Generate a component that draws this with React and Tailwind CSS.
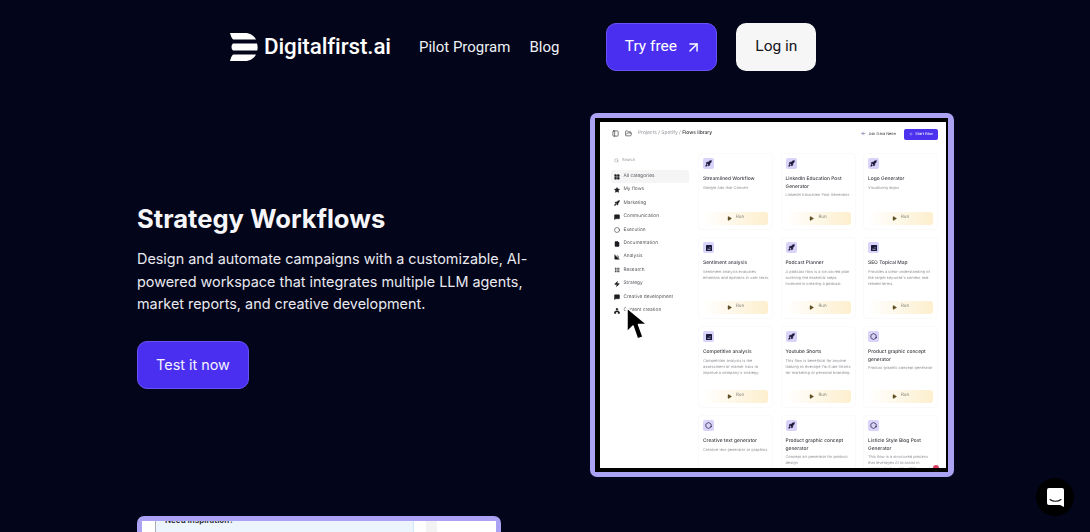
import {
  ArrowLeft,
  ArrowUpRight,
  BarChart3,
  Circle,
  FileText,
  FolderOpen,
  Grip,
  Hexagon,
  LayoutGrid,
  MessageSquare,
  Network,
  PanelLeft,
  Play,
  Plus,
  Rocket,
  Search,
  Star,
  Zap,
} from 'lucide-react';

const categories = [
  { label: 'All categories', Icon: LayoutGrid, active: true },
  { label: 'My flows', Icon: Star },
  { label: 'Marketing', Icon: Rocket },
  { label: 'Communication', Icon: MessageSquare },
  { label: 'Execution', Icon: Circle, outline: true },
  { label: 'Documentation', Icon: FileText },
  { label: 'Analysis', Icon: BarChart3 },
  { label: 'Research', Icon: Grip },
  { label: 'Strategy', Icon: Zap },
  { label: 'Creative development', Icon: MessageSquare },
  { label: 'Content creation', Icon: Network },
];

const flows = [
  { title: 'Streamlined Workflow', desc: 'Google Ads that Convert', icon: 'rocket' },
  { title: 'LinkedIn Education Post Generator', desc: 'LinkedIn Education Post Generator', icon: 'rocket' },
  { title: 'Logo Generator', desc: 'Visualizing logos', icon: 'rocket' },
  {
    title: 'Sentiment analysis',
    desc: 'Sentiment analysis evaluates emotions and opinions in user texts.',
    icon: 'chart',
  },
  {
    title: 'Podcast Planner',
    desc: 'A podcast flow is a structured plan outlining the essential steps involved in creating a podcast.',
    icon: 'rocket',
  },
  {
    title: 'SEO Topical Map',
    desc: "Provides a clear understanding of the target keyword's context and related terms.",
    icon: 'chart',
  },
  {
    title: 'Competitive analysis',
    desc: "Competition analysis is the assessment of market risks to improve a company's strategy.",
    icon: 'chart',
  },
  {
    title: 'Youtube Shorts',
    desc: 'This flow is beneficial for anyone looking to leverage YouTube Shorts for marketing or personal branding.',
    icon: 'rocket',
  },
  { title: 'Product graphic concept generator', desc: 'Product graphic concept generator', icon: 'hexagon' },
  { title: 'Creative text generator', desc: 'Creative text generator or graphics', icon: 'hexagon' },
  { title: 'Product graphic concept generator', desc: 'Concept art generator for product design', icon: 'rocket' },
  {
    title: 'Listicle Style Blog Post Generator',
    desc: 'This flow is a structured process that leverages AI to assist in creating high-quality, SEO-optimized blog posts for readers.',
    icon: 'hexagon',
  },
];

function Logo() {
  return (
    <svg width="28" height="28" viewBox="0 0 28 28" fill="#fff">
      <path d="M0 0h15c5 0 9 2.500 11 6.500H3.500C2 6.500 .8 2.500 0 0z" />
      <path d="M3 10.500h24c.7 1.800.9 5 .2 7H3c-2-1.500-2-5.500 0-7z" />
      <path d="M3.500 21.500H26C24 25.500 20 28 15 28H0c.8-2.500 2-6.500 3.500-6.500z" />
    </svg>
  );
}

function FlowIcon({ icon }) {
  if (icon === 'rocket') return <Rocket size={7} color="#1c1a3a" fill="#1c1a3a" />;
  if (icon === 'hexagon') return <Hexagon size={7} color="#1c1a3a" strokeWidth={2.500} />;
  return (
    <svg width="6" height="6" viewBox="0 0 6 6">
      <rect width="6" height="6" rx="0.500" fill="#1c1a3a" />
      <path d="M1.500 4.500h3M2 3.500V3M4 3.500V2" stroke="#d9d3fa" strokeWidth="0.600" />
    </svg>
  );
}

function FlowCard({ flow }) {
  return (
    <div className="flex flex-col rounded-[4px] border border-[#fafafa] px-[4px] pt-[4px] pb-[4px]">
      <div className="flex h-[11px] w-[11px] shrink-0 items-center justify-center rounded-[2px] bg-[#d9d3fa]">
        <FlowIcon icon={flow.icon} />
      </div>
      <div className="mt-[7px] text-[4.900px] leading-[7.500px] font-medium text-[#3c3d44]">{flow.title}</div>
      <div className="mt-[1px] -mr-[2px] text-[3.900px] leading-[6px] text-[#96979c]">{flow.desc}</div>
      <div className="mt-auto flex h-[13px] shrink-0 items-center justify-center gap-[4px] rounded-[3px] bg-gradient-to-r from-[#ffffff] to-[#fdefce] text-[4.500px] text-[#85867c]">
        <Play size={5} color="#5c4a20" fill="#5c4a20" />
        Run
      </div>
    </div>
  );
}

function FlowsLibrary() {
  return (
    <div className="relative h-[364px] w-[364px] shrink-0 rounded-[7px] bg-[#aca2f4] py-[5px] pr-[6px] pl-[5px]">
      <div className="relative h-full w-full overflow-hidden border-y-[4px] border-r-[2px] border-l-[5px] border-black bg-white font-['Inter',sans-serif] blur-[0.4px] [text-rendering:geometricPrecision]">
        <div className="flex h-[22px] items-center justify-between pt-[2px] pr-[8px] pl-[12px]">
          <div className="flex items-center gap-[6px]">
            <PanelLeft size={7} color="#222" />
            <FolderOpen size={7} color="#222" />
            <span className="text-[4.900px] text-[#93949a]">
              Projects / Spotify / <span className="font-medium text-[#2b2c32]">Flows library</span>
            </span>
          </div>
          <div className="flex items-center gap-[8px]">
            <span className="flex items-center gap-[3px] text-[3.900px] text-[#3c3d44]">
              <ArrowLeft size={5} color="#2d2a78" />
              Ask Data Neon
            </span>
            <span className="flex h-[11px] w-[34px] items-center justify-center gap-[2px] rounded-[2px] bg-[#4c31ee] text-[3.900px] text-white">
              <Plus size={4} color="#fff" />
              Start flow
            </span>
          </div>
        </div>
        <div className="flex pt-[9px] pl-[11px]">
          <div className="w-[78px] shrink-0">
            <div className="mt-[2px] flex h-[10px] items-center gap-[3px] pl-[3px] text-[4px] text-[#9a9ba0]">
              <Search size={5} color="#888" />
              Search
            </div>
            <div className="mt-[5px] flex flex-col">
              {categories.map(({ label, Icon, active, outline }) => (
                <div
                  key={label}
                  className={`flex h-[13.400px] items-center gap-[3.500px] rounded-[2px] pl-[3px] text-[4.800px] text-[#55565c] ${
                    active ? 'bg-[#f5f5f6]' : ''
                  }`}
                >
                  <Icon size={6} color="#1d1d22" fill={outline ? 'none' : '#1d1d22'} />
                  {label}
                </div>
              ))}
            </div>
          </div>
          <div className="ml-[9px] grid w-[240px] grid-cols-3 grid-rows-[77px_82px_82px_82px] gap-x-[7.500px] gap-y-[7px]">
            {flows.map((flow, i) => (
              <FlowCard key={i} flow={flow} />
            ))}
          </div>
        </div>
        <span className="absolute right-[7px] -bottom-[3px] h-[6px] w-[6px] rounded-full bg-[#e0405f]" />
      </div>
      <svg className="absolute top-[193px] left-[35px]" width="24" height="36" viewBox="0 0 24 36">
        <path
          d="M2 2v24l6-6 4.500 13 5.500-2-4.500-12.500H22z"
          fill="#000"
          stroke="#fff"
          strokeWidth="1.500"
          strokeLinejoin="round"
        />
      </svg>
    </div>
  );
}

function InspirationPreview() {
  return (
    <div className="ml-[137px] h-[140px] w-[364px] overflow-hidden rounded-t-[7px] bg-[#aca2f4] px-[5px] pt-[5px]">
      <div className="flex h-full bg-white pl-[13px]">
        <div className="h-full w-[259px] overflow-hidden border-x border-r-[#cfeafc] border-l-[#a9aeb4] bg-[#ecf4fd] pl-[9px]">
          <div className="-mt-[6px] font-['Inter',sans-serif] text-[8px] leading-[10px] font-bold text-[#33343c]">
            Need inspiration?
          </div>
        </div>
        <div className="ml-[12px] h-full w-[11px] bg-[#f3f3f3]" />
      </div>
    </div>
  );
}

export default function App() {
  return (
    <div className="relative h-[532px] w-[1090px] overflow-hidden bg-[#03051a] text-white">
      <header className="flex h-[94px] items-center pl-[230px] font-['Roboto',sans-serif]">
        <Logo />
        <span className="ml-[6px] text-[22.400px] font-medium tracking-[-0.1px]">Digitalfirst.ai</span>
        <nav className="ml-[28px] flex gap-[19px] text-[15px] text-[#eef0f6]">
          <a>Pilot Program</a>
          <a>Blog</a>
        </nav>
        <a className="ml-[47px] flex h-[48px] w-[111px] items-center justify-center gap-[8px] rounded-[10px] border border-[#6a52f5] bg-[#4a2ff0] pl-[3px] text-[15.500px]">
          Try free
          <ArrowUpRight size={17} />
        </a>
        <a className="ml-[19px] flex h-[48px] w-[80px] items-center justify-center rounded-[10px] bg-[#f6f6f6] text-[15.500px] text-[#15151c]">
          Log in
        </a>
      </header>

      <section className="mt-[19px] flex items-center pl-[137px]">
        <div className="w-[453px] font-['Inter',sans-serif]">
          <h1 className="pt-[1px] text-[25.600px] leading-[34px] font-bold text-[#f6f6f9]">Strategy Workflows</h1>
          <p className="mt-[12px] max-w-[396px] text-[14.400px] leading-[22.500px] text-[#e9e9ef]">
            Design and automate campaigns with a customizable, AI-powered workspace that integrates multiple LLM
            agents, market reports, and creative development.
          </p>
          <a className="mt-[25px] flex h-[48px] w-[112px] items-center justify-center rounded-[10px] border border-[#6a52f5] bg-[#4a2ff0] text-[14.400px] text-[#f4f2ff]">
            Test it now
          </a>
        </div>
        <FlowsLibrary />
      </section>

      <div className="mt-[39px]">
        <InspirationPreview />
      </div>

      <div className="absolute right-[16px] bottom-[16px] flex h-[38px] w-[38px] items-center justify-center rounded-full bg-black">
        <svg width="17" height="19" viewBox="0 0 17 19">
          <path d="M2 0h13a2 2 0 0 1 2 2v17l-4-2H2a2 2 0 0 1-2-2V2a2 2 0 0 1 2-2z" fill="#fff" />
          <path d="M3 11.500c3 2.400 8 2.400 11 0" fill="none" stroke="#111" strokeWidth="1.100" strokeLinecap="round" />
        </svg>
      </div>
    </div>
  );
}
